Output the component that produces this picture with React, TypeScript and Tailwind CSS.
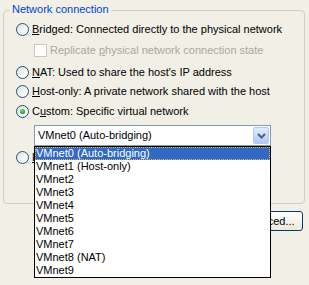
import React from 'react';

const items = [
  'VMnet0 (Auto-bridging)',
  'VMnet1 (Host-only)',
  'VMnet2',
  'VMnet3',
  'VMnet4',
  'VMnet5',
  'VMnet6',
  'VMnet7',
  'VMnet8 (NAT)',
  'VMnet9',
];

const Radio: React.FC<{ checked?: boolean }> = ({ checked }) => (
  <svg width="13" height="13" viewBox="0 0 13 13" className="shrink-0">
    <defs>
      <linearGradient id="rg" x1="0" y1="0" x2="1" y2="1">
        <stop offset="0" stopColor="#dcdad0" />
        <stop offset="0.6" stopColor="#f8f8f6" />
        <stop offset="1" stopColor="#ffffff" />
      </linearGradient>
      <radialGradient id="gd" cx="0.4" cy="0.35" r="0.7">
        <stop offset="0" stopColor="#6fe06a" />
        <stop offset="1" stopColor="#1c9a1c" />
      </radialGradient>
    </defs>
    <circle cx="6.5" cy="6.5" r="6" fill="url(#rg)" stroke="#1c5180" strokeWidth="1" />
    {checked && <circle cx="6.5" cy="6.5" r="2.6" fill="url(#gd)" />}
  </svg>
);

const Row: React.FC<{ checked?: boolean; className?: string; children: React.ReactNode }> = ({ checked, className, children }) => (
  <div className={`flex items-center h-[13px] ${className ?? ''}`}>
    <Radio checked={checked} />
    <span className="ml-[3px] whitespace-nowrap">{children}</span>
  </div>
);

export default function App() {
  return (
    <div className="relative w-[309px] h-[285px] overflow-hidden bg-[#f1efe6] text-[11px] leading-[13px] text-black font-['Liberation_Sans',Arial,sans-serif]">
      {/* Group box */}
      <div className="relative ml-[3px] mt-[10px] w-[302px] h-[194px] border border-[#d0d0bf] rounded-[4px] pl-[12px]">
        <div className="absolute left-[6px] top-[-8px] px-[2px] bg-[#f1efe6] text-[#0046d5]">Network connection</div>

        <Row className="mt-[12px]"><span className="underline">B</span>ridged: Connected directly to the physical network</Row>

        <div className="flex items-center h-[13px] mt-[8px] ml-[18px]">
          <div className="w-[13px] h-[13px] border border-[#cac8bb] bg-white shrink-0" />
          <span className="ml-[3px] text-[#aca899] whitespace-nowrap">Replicate <span className="underline">p</span>hysical network connection state</span>
        </div>

        <Row className="mt-[9px]"><span className="underline">N</span>AT: Used to share the host's IP address</Row>
        <Row className="mt-[6px]"><span className="underline">H</span>ost-only: A private network shared with the host</Row>
        <Row checked className="mt-[7px]">C<span className="underline">u</span>stom: Specific virtual network</Row>

        {/* Combo */}
        <div className="mt-[7px] ml-[18px] w-[237px] h-[21px] border border-[#7f9db9] bg-white flex items-center justify-between pl-[3px] pr-[1px]">
          <span className="whitespace-nowrap">VMnet0 (Auto-bridging)</span>
          <div className="w-[16px] h-[17px] rounded-[2px] border border-[#b5c8f0] bg-gradient-to-b from-[#e1eafe] to-[#b4c8f5] flex items-center justify-center">
            <svg width="9" height="6" viewBox="0 0 9 6">
              <path d="M1 1 L4.5 4.5 L8 1" fill="none" stroke="#4d6185" strokeWidth="2" />
            </svg>
          </div>
        </div>

        <Row className="mt-[5px]"><span className="underline">L</span>AN segment:</Row>
      </div>

      {/* Advanced button */}
      <div className="flex justify-end mt-[7px] pr-[6px]">
        <button className="w-[75px] h-[20px] rounded-[3px] border border-[#003c74] bg-gradient-to-b from-[#ffffff] to-[#ece9d8] text-[11px] leading-[13px] text-black">
          A<span className="underline">d</span>vanced...
        </button>
      </div>

      {/* Open dropdown list */}
      <div className="absolute left-[34px] top-[146px] w-[237px] h-[132px] border border-black bg-white">
        {items.map((it, i) => (
          <div
            key={it}
            className={
              i === 0
                ? 'h-[13px] pl-[1px] bg-[#316ac5] text-white outline outline-1 outline-dotted outline-[#e8b060] -outline-offset-1 whitespace-nowrap'
                : 'h-[13px] pl-[1px] whitespace-nowrap'
            }
          >
            {it}
          </div>
        ))}
      </div>
    </div>
  );
}
